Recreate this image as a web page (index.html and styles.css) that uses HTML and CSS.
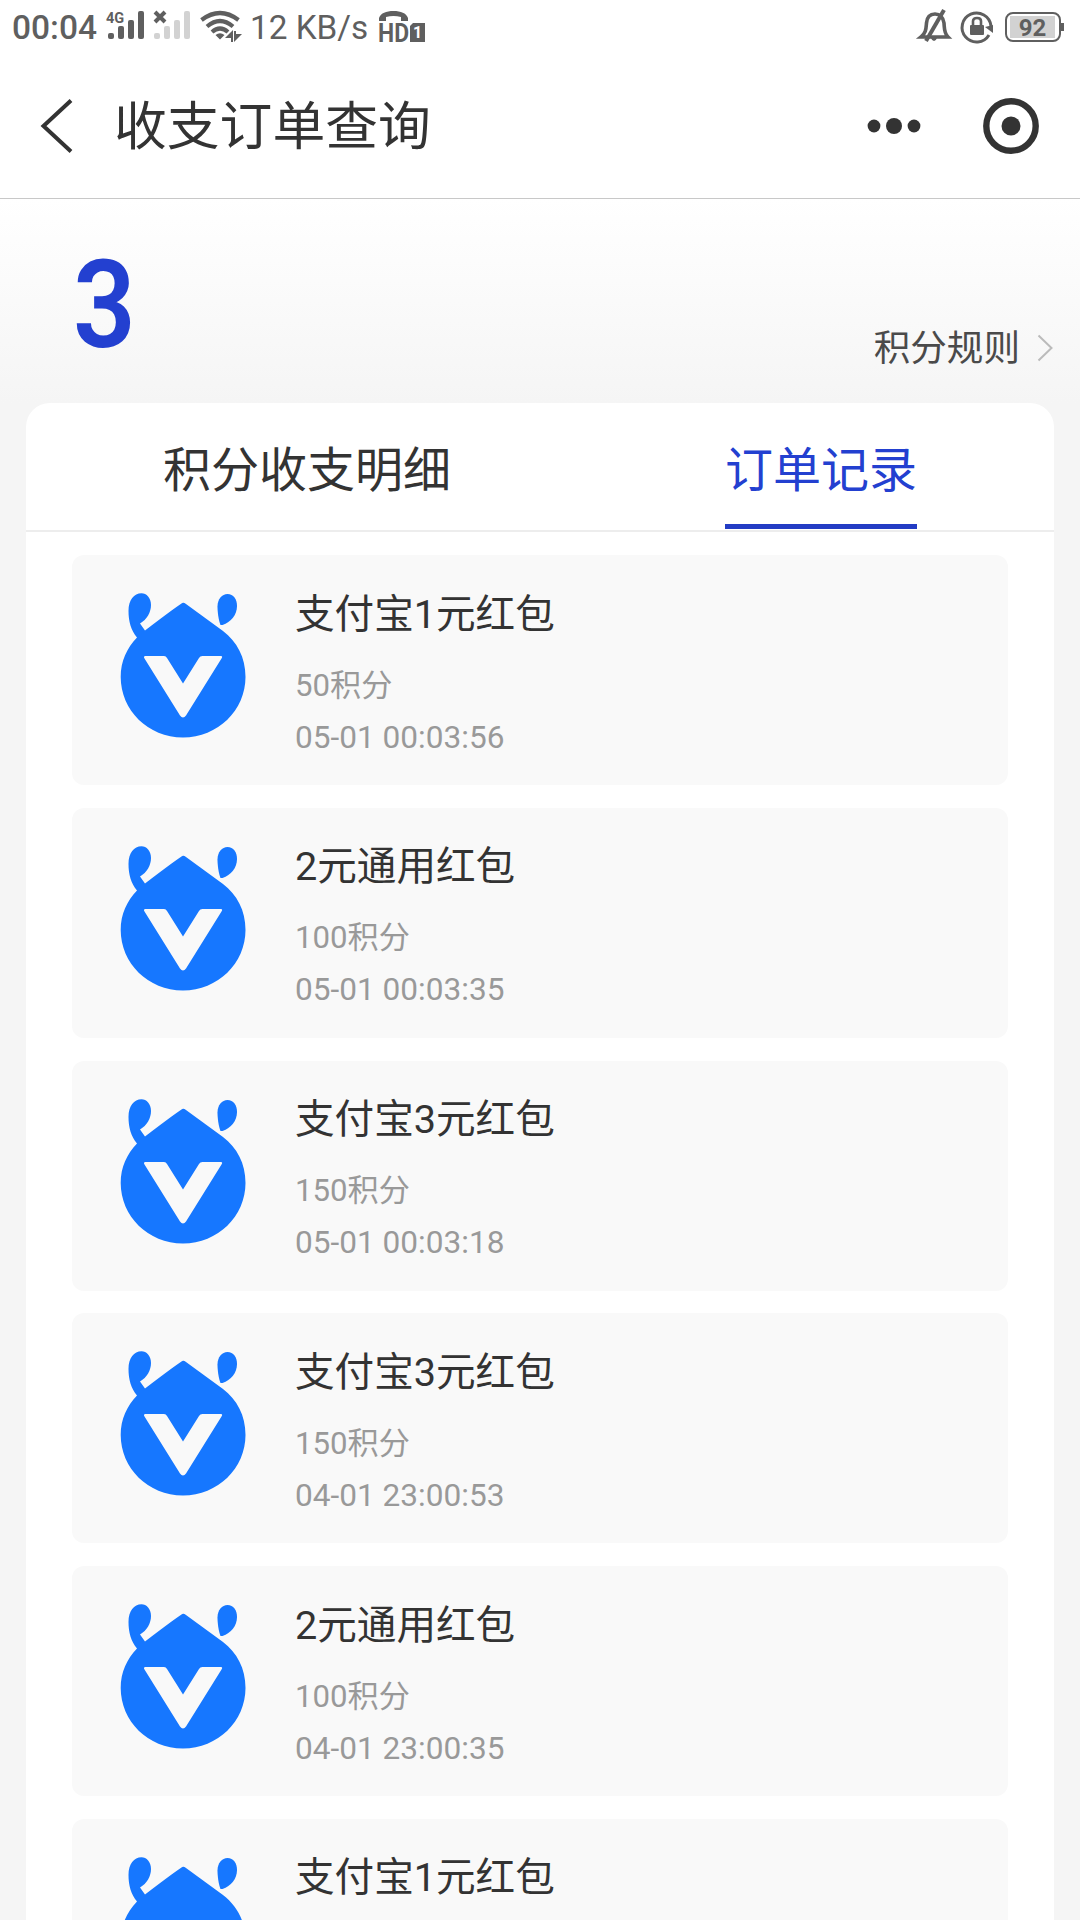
FILE: index.html
```html
<!DOCTYPE html>
<html lang="zh-CN">
<head>
    <meta charset="UTF-8">
    <meta name="viewport" content="width=device-width, initial-scale=1.0">
    <title>收支订单查询</title>
    <link rel="stylesheet" href="styles.css">
</head>
<body>
    <svg width="0" height="0" style="display: none;">
        <symbol id="logo" viewBox="0 0 170 190">
            <path fill="#1677ff" d="M83 32.8 Q80.500 33.500 45 60.500 L40 53.500 C47 49.500 51 42 51 35 C51 28 46.500 23.300 41.500 23.300 C34 23.300 28.500 30 28.500 41 C28.500 51 31 60.500 37 67.500 C27 78 20.700 91 20.700 107 C20.700 140 48 167.500 83 167.500 C118 167.500 145.500 140 145.500 107 C145.500 87 137 72 123 61 L86 34 Q84 32.500 83 32.800 Z"/>
            <path fill="#1677ff" d="M120.500 55 C118.500 50 117.500 42 117.500 36.500 C117.500 29 122 24 127.500 24 C133.500 24 137 29 137 36 C137 45 131 52 122.500 55 Z"/>
            <path fill="#f9f9f9" d="M45.500 86 H64 Q66 86 67 88 L83 113.500 L99 88 Q100 86 102.500 86 H121 Q123 86 121.500 88.500 L86 145.500 Q83 149.500 80 145.500 L44.500 88.500 Q43 86 45.500 86 Z"/>
        </symbol>
    </svg>

    <div class="status-bar">
        <span class="clock">00:04</span>
        <svg class="signals" width="86" height="32" viewBox="0 0 86 32">
            <text x="0" y="12" class="net-type">4G</text>
            <g fill="#5f5f5f">
                <rect x="2" y="22" width="6" height="6" rx="2"/>
                <rect x="12" y="15" width="6" height="13" rx="2"/>
                <rect x="22" y="9" width="6" height="19" rx="2"/>
                <rect x="32" y="0" width="6" height="28" rx="2"/>
            </g>
            <path d="M49 1 L59 11 M59 1 L49 11" stroke="#5f5f5f" stroke-width="4"/>
            <g fill="#d2d2d2">
                <rect x="48" y="22" width="6" height="6" rx="2"/>
                <rect x="58" y="15" width="6" height="13" rx="2"/>
                <rect x="68" y="9" width="6" height="19" rx="2"/>
                <rect x="78" y="0" width="6" height="28" rx="2"/>
            </g>
        </svg>
        <svg class="wifi" width="43" height="32" viewBox="0 0 43 32">
            <g fill="none" stroke="#5f5f5f" stroke-width="4.200">
                <path d="M1.500 9 Q20 -5 38.500 9"/>
                <path d="M7 15.500 Q20 4.500 33 15.500"/>
                <path d="M12 21 Q20 14 28 21"/>
            </g>
            <path fill="#5f5f5f" d="M15.500 24 Q20 20.500 24.500 24 L20 28.500 Z M25 27 L33 19 V31 H31 V27 Z M34 20 V31 L42 23 H36 V20 Z"/>
        </svg>
        <span class="speed">12 KB/s</span>
        <svg class="hd" width="47" height="32" viewBox="0 0 47 32">
            <path fill="#5f5f5f" d="M0 7 C2 2 7 0 14.500 0 C22 0 27 2 29 7 V10 H22 V6 Q14.500 4 7 6 V10 H0 Z"/>
            <text x="-1" y="31" class="hd-text" textLength="31" lengthAdjust="spacingAndGlyphs">HD</text>
            <path d="M34 12 H46 V31 H31 V15 Z" fill="#5f5f5f"/>
            <text x="34" y="27" class="hd-num">1</text>
        </svg>
        <div class="status-right">
            <svg width="32" height="34" viewBox="0 0 32 34">
                <g fill="none" stroke="#5f5f5f" stroke-width="3.600">
                    <path d="M2 27 H29 C25 23 25.500 19 25 13 C24 7 21 4 16 4 C11 4 8 7 7.500 13 C7 19 7 23 2 27 Z"/>
                    <path d="M25 0 L7 31" stroke-width="4"/>
                </g>
                <path fill="#5f5f5f" d="M12 28 H18 Q17 31 15 31 Q13 31 12 28 Z"/>
            </svg>
            <svg width="33" height="34" viewBox="0 0 33 34">
                <path d="M28 25 A14.500 14.500 0 1 1 30 16" fill="none" stroke="#5f5f5f" stroke-width="3"/>
                <path d="M24 17 L32 15 V23 Z" fill="#5f5f5f"/>
                <rect x="9" y="15" width="14" height="10" rx="1" fill="#5f5f5f"/>
                <path d="M12 15 V11 Q12 8 16 8 Q20 8 20 11 V15" fill="none" stroke="#5f5f5f" stroke-width="2.600"/>
            </svg>
            <div class="battery"><span>92</span></div>
        </div>
    </div>

    <div class="nav-bar">
        <svg class="back" width="32" height="54" viewBox="0 0 32 54">
            <path d="M31 1.500 L3.500 27 L31 52.500" fill="none" stroke="#333" stroke-width="4"/>
        </svg>
        <h1>收支订单查询</h1>
        <svg class="more" width="54" height="18" viewBox="0 0 54 18" fill="#333">
            <circle cx="7" cy="9" r="6.400"/>
            <circle cx="27" cy="9" r="8"/>
            <circle cx="47" cy="9" r="6.400"/>
        </svg>
        <svg class="close" width="56" height="56" viewBox="0 0 56 56">
            <circle cx="28" cy="28" r="24.700" fill="none" stroke="#333" stroke-width="6.400"/>
            <circle cx="28" cy="28" r="9.500" fill="#333"/>
        </svg>
    </div>

    <div class="summary">
        <div class="points">3</div>
        <div class="rules">
            <span>积分规则</span>
            <svg width="17" height="28" viewBox="0 0 17 28">
                <path d="M1.500 1.500 L14.500 14 L1.500 26.500" fill="none" stroke="#bbb" stroke-width="2"/>
            </svg>
        </div>
    </div>

    <div class="card">
        <div class="tabs">
            <div class="tab">积分收支明细</div>
            <div class="tab active">订单记录</div>
        </div>
        <div class="list">
            <div class="item">
                <svg class="logo"><use href="#logo"/></svg>
                <div class="info">
                    <div class="name">支付宝1元红包</div>
                    <div class="cost">50积分</div>
                    <div class="time">05-01 00:03:56</div>
                </div>
            </div>
            <div class="item">
                <svg class="logo"><use href="#logo"/></svg>
                <div class="info">
                    <div class="name">2元通用红包</div>
                    <div class="cost">100积分</div>
                    <div class="time">05-01 00:03:35</div>
                </div>
            </div>
            <div class="item">
                <svg class="logo"><use href="#logo"/></svg>
                <div class="info">
                    <div class="name">支付宝3元红包</div>
                    <div class="cost">150积分</div>
                    <div class="time">05-01 00:03:18</div>
                </div>
            </div>
            <div class="item">
                <svg class="logo"><use href="#logo"/></svg>
                <div class="info">
                    <div class="name">支付宝3元红包</div>
                    <div class="cost">150积分</div>
                    <div class="time">04-01 23:00:53</div>
                </div>
            </div>
            <div class="item">
                <svg class="logo"><use href="#logo"/></svg>
                <div class="info">
                    <div class="name">2元通用红包</div>
                    <div class="cost">100积分</div>
                    <div class="time">04-01 23:00:35</div>
                </div>
            </div>
            <div class="item">
                <svg class="logo"><use href="#logo"/></svg>
                <div class="info">
                    <div class="name">支付宝1元红包</div>
                </div>
            </div>
        </div>
    </div>
</body>
</html>
```

FILE: styles.css
```css
* {
    box-sizing: border-box;
}
body {
    margin: 0;
    height: 1920px;
    overflow: hidden;
    display: flex;
    flex-direction: column;
    background-color: #f5f5f5;
    color: #333;
    font-family: Roboto, "Noto Sans CJK SC", sans-serif;
}
svg {
    flex-shrink: 0;
    overflow: visible;
}

/* status bar */
.status-bar {
    height: 56px;
    flex-shrink: 0;
    display: flex;
    align-items: center;
    padding: 0 15px 2px 12px;
    background-color: #fff;
    color: #5f5f5f;
}
.clock {
    width: 94px;
    font-size: 33.5px;
    font-weight: 500;
    line-height: 40px;
    padding-top: 2px;
    white-space: nowrap;
}
.net-type {
    font-size: 14.5px;
    font-weight: bold;
    fill: #5f5f5f;
}
.wifi {
    margin-left: 8px;
}
.speed {
    width: 129px;
    margin-left: 7px;
    font-size: 33.3px;
    white-space: nowrap;
}
.hd-text {
    font-size: 26px;
    font-weight: bold;
    fill: #5f5f5f;
}
.hd-num {
    font-size: 16px;
    font-weight: bold;
    fill: #fff;
}
.status-right {
    margin-left: auto;
    display: flex;
    align-items: center;
    gap: 11px;
}
.status-right svg {
    margin-left: -1px;
}
.battery {
    position: relative;
    width: 56px;
    height: 30px;
    margin-right: 4px;
    padding: 2px;
    border: 2px solid #5f5f5f;
    border-radius: 8px;
}
.battery span {
    display: block;
    width: 45px;
    height: 22px;
    margin-left: 1px;
    background-color: #d2d2d2;
    font-size: 24px;
    font-weight: bold;
    line-height: 24px;
    text-align: center;
}
.battery::after {
    content: "";
    position: absolute;
    right: -5px;
    top: 9px;
    width: 3px;
    height: 8px;
    background-color: #5f5f5f;
}

/* title bar */
.nav-bar {
    height: 143px;
    flex-shrink: 0;
    display: flex;
    align-items: center;
    padding: 0 41px 3px 40px;
    background-color: #fff;
    border-bottom: 1px solid #c8c8c8;
}
.nav-bar h1 {
    margin: 2px 0 0 42px;
    font-size: 52.8px;
    font-weight: 400;
    line-height: 60px;
}
.more {
    margin-left: auto;
}
.close {
    margin-left: 62px;
}

/* points */
.summary {
    height: 204px;
    flex-shrink: 0;
    display: flex;
    justify-content: space-between;
    align-items: flex-start;
    padding: 36px 26px 0 73px;
    background: linear-gradient(#fff, #f5f5f5);
}
.points {
    color: #2340d0;
    font-size: 122px;
    font-weight: 600;
    line-height: 142px;
    transform: scaleX(0.9);
    transform-origin: left;
}
.rules {
    display: flex;
    align-items: center;
    margin-top: 92px;
    font-size: 36.6px;
    line-height: 40px;
    color: #4a4a4a;
}
.rules span {
    padding-top: 2px;
}
.rules svg {
    margin-left: 17px;
}

/* tabs and orders */
.card {
    flex: 1;
    min-height: 0;
    margin: 0 26px;
    overflow: hidden;
    background-color: #fff;
    border-radius: 24px 24px 0 0;
}
.tabs {
    height: 129px;
    display: flex;
    justify-content: space-around;
    border-bottom: 2px solid #ededed;
}
.tab {
    height: 126px;
    font-size: 48px;
    line-height: 135px;
}
.tab.active {
    color: #2340d0;
    border-bottom: 5px solid #233cc4;
}
.list {
    display: flex;
    flex-direction: column;
    gap: 22.8px;
    padding: 23px 46px 0;
}
.item {
    height: 230px;
    flex-shrink: 0;
    display: flex;
    border-radius: 12px;
    background-color: #f9f9f9;
}
.logo {
    width: 170px;
    height: 190px;
    margin: 15px 0 0 28px;
}
.info {
    margin: 36.5px 0 0 25px;
    white-space: nowrap;
}
.name {
    font-size: 39.6px;
    line-height: 46px;
}
.cost,
.time {
    color: #999;
    font-size: 31.2px;
    line-height: 52px;
}
.cost {
    margin-top: 22px;
}
.time {
    font-size: 31.6px;
}
```
